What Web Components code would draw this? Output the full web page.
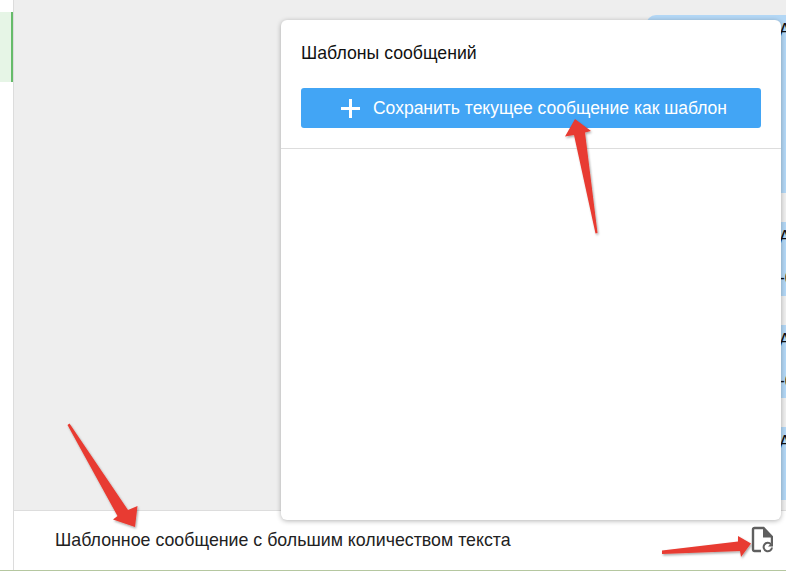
<!DOCTYPE html>
<html><head><meta charset="utf-8">
<style>
html,body{margin:0;padding:0;height:100%;overflow:hidden;background:#fff}
body{font-family:"Liberation Sans",Arial,sans-serif}
</style></head><body>
<template id="t-app"><style>
:host{display:grid;grid-template-columns:14px 1fr;width:786px;height:571px;position:relative;overflow:hidden;background:#fff;box-sizing:border-box;border-bottom:1px solid #b5c7a0}
</style><slot name="side"></slot><slot name="main"></slot><slot></slot></template>

<template id="t-side"><style>
:host{display:block;box-sizing:border-box;border-right:1px solid #dcdcdc;padding-top:12px;background:#fff}
.i{height:70px;background:#e6f5e6;border-right:2px solid #66bb6a}
</style><div class="i"></div></template>

<template id="t-main"><style>
:host{display:flex;flex-direction:column;min-width:0;height:570px}
.f{flex:1;min-height:0;background:#eee;overflow:hidden}
</style><div class="f"><slot name="list"></slot></div><slot name="bar"></slot></template>

<template id="t-list"><style>
:host{display:flex;flex-direction:column;align-items:flex-end;padding-top:15px;gap:29px;box-sizing:border-box}
</style><slot></slot></template>

<template id="t-bubble"><style>
:host{display:block;box-sizing:border-box;width:140px;background:#b3d7f5;border-radius:10px 0 0 10px;padding:3px 0 0 133px;font-size:17.6px;line-height:24px;color:#111;white-space:nowrap;overflow:hidden}
div+div{margin-top:17px}
</style><div>А</div><div><slot></slot></div></template>

<template id="t-bar"><style>
:host{display:flex;align-items:center;justify-content:space-between;box-sizing:border-box;height:60px;background:#fff;border-top:1px solid #ddd;padding:0 13px 1px 41px;font-size:17.8px;color:#222}
svg{display:block;width:24px;height:28px;margin-top:0}
</style><span><slot></slot></span>
<svg viewBox="0 0 24 28" fill="none"><path d="M12 25H5.500a1.500 1.500 0 0 1-1.500-1.500V3.500A1.500 1.500 0 0 1 5.500 2H14.500L23 11v6" stroke="#5f5f5f" stroke-width="2.400"/><path d="M14 1.500V11.500H23.500Z" fill="#5f5f5f"/><path d="M23 21.500a4.200 4.200 0 1 1-1-3.200" stroke="#5f5f5f" stroke-width="2"/><path d="M24 15.500v5h-5z" fill="#5f5f5f"/></svg></template>

<template id="t-panel"><style>
:host{position:absolute;left:281px;top:20px;width:500px;height:500px;background:#fff;border-radius:6px;box-shadow:0 1px 5px rgba(0,0,0,.3);display:block;font-size:17.7px;color:#111}
header{box-sizing:border-box;height:129px;padding:23px 20px 0;border-bottom:1px solid #ddd}
h2{margin:0 0 25px;font:inherit;line-height:20px}
</style><header><h2><slot name="title"></slot></h2><slot name="action"></slot></header></template>

<template id="t-btn"><style>
:host{display:flex;align-items:center;justify-content:center;gap:13px;height:40px;background:#42a5f5;border-radius:3px;color:#fff;font-size:17.5px;padding-left:6px}
svg{width:19px;height:19px;display:block}
</style><svg viewBox="0 0 19 19"><path d="M9.500 0v19M0 9.500h19" stroke="#fff" stroke-width="3"/></svg><span><slot></slot></span></template>

<template id="t-arrows"><style>
:host{position:absolute;inset:0;display:block;pointer-events:none}
svg{width:786px;height:571px;display:block}
</style><svg viewBox="0 0 786 571">
<defs><filter id="s" x="-30%" y="-30%" width="160%" height="160%"><feDropShadow dx="1" dy="1.500" stdDeviation="1" flood-color="#000" flood-opacity=".35"/></filter></defs>
<g fill="#e83b30" filter="url(#s)">
<path d="M595.500 233.500L574 135L565 136.500L575 119L591 131L585 132.500L597.500 233Z"/>
<path d="M67.500 425L69.500 423.500L128 510L137.500 506L135 527L113 519.500L117.500 516Z"/>
<path d="M662 554L662 550.500L738 541.500L738 536L751 543.500L741 557L740 551Z"/>
</g></svg></template>

<app-shell>
<side-rail slot="side"></side-rail>
<main-area slot="main">
 <msg-list slot="list">
  <msg-bubble style="height:178px"></msg-bubble>
  <msg-bubble style="height:74px">-0</msg-bubble>
  <msg-bubble style="height:73px">-0</msg-bubble>
  <msg-bubble style="height:73px"></msg-bubble>
 </msg-list>
 <compose-bar slot="bar">Шаблонное сообщение с большим количеством текста</compose-bar>
</main-area>
<tpl-panel><span slot="title">Шаблоны сообщений</span><save-btn slot="action">Сохранить текущее сообщение как шаблон</save-btn></tpl-panel>
<red-arrows></red-arrows>
</app-shell>
<script>
[['app-shell','t-app'],['side-rail','t-side'],['main-area','t-main'],['msg-list','t-list'],['msg-bubble','t-bubble'],['compose-bar','t-bar'],['tpl-panel','t-panel'],['save-btn','t-btn'],['red-arrows','t-arrows']].forEach(([n,t])=>{
 customElements.define(n,class extends HTMLElement{constructor(){super();this.attachShadow({mode:'open'}).appendChild(document.getElementById(t).content.cloneNode(true));}});
});
</script>
</body></html>
